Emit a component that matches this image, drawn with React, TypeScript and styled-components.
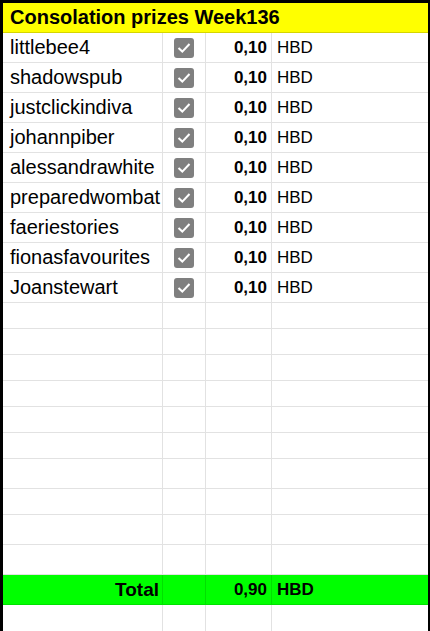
import React from 'react';
import styled, { createGlobalStyle } from 'styled-components';

const GlobalStyle = createGlobalStyle`
  html, body {
    margin: 0;
    padding: 0;
    background: #000;
  }
  * {
    box-sizing: border-box;
  }
`;

const Sheet = styled.div`
  width: 430px;
  height: 631px;
  overflow: hidden;
  background: #fff;
  border-left: 3px solid #000;
  border-top: 3px solid #000;
  border-right: 2px solid #000;
  font-family: 'Liberation Sans', Arial, sans-serif;
  color: #000;
`;

const Header = styled.div`
  height: 30px;
  background: #ffff00;
  border-bottom: 1px solid #d6d600;
  display: flex;
  align-items: center;
  padding-left: 7px;
  font-size: 20px;
  font-weight: bold;
`;

const Row = styled.div<{ $h: number; $total?: boolean }>`
  display: grid;
  grid-template-columns: 160px 43px 66px 1fr;
  height: ${(p) => p.$h}px;
  background: ${(p) => (p.$total ? '#00ff00' : '#fff')};
`;

const Cell = styled.div<{ $total?: boolean; $last?: boolean }>`
  border-bottom: 1px solid ${(p) => (p.$total ? '#00e000' : '#e2e2e2')};
  border-right: ${(p) => (p.$last ? 'none' : `1px solid ${p.$total ? '#00e000' : '#e2e2e2'}`)};
  display: flex;
  overflow: hidden;
  white-space: nowrap;
`;

const NameCell = styled(Cell)`
  align-items: center;
  padding-left: 7px;
  font-size: 20px;
`;

const TotalLabel = styled(Cell)`
  align-items: center;
  justify-content: flex-end;
  padding-right: 3px;
  font-size: 19px;
  font-weight: bold;
`;

const CheckCell = styled(Cell)`
  align-items: center;
  justify-content: center;
`;

const AmountCell = styled(Cell)`
  align-items: flex-end;
  justify-content: flex-end;
  padding: 0 4px 4px 0;
  font-size: 17px;
  font-weight: bold;
`;

const UnitCell = styled(Cell)<{ $bold?: boolean }>`
  align-items: flex-end;
  padding: 0 0 4px 5px;
  font-size: 17px;
  font-weight: ${(p) => (p.$bold ? 'bold' : 'normal')};
`;

const Box = styled.span`
  width: 20px;
  height: 20px;
  border-radius: 3px;
  background: #7f7f7f;
  display: flex;
  align-items: center;
  justify-content: center;
`;

const Check = () => (
  <Box>
    <svg width="20" height="20" viewBox="0 0 20 20">
      <path d="M4.5 10 L8.3 13.6 L15.5 6" fill="none" stroke="#fff" strokeWidth="2" />
    </svg>
  </Box>
);

const winners = [
  'littlebee4',
  'shadowspub',
  'justclickindiva',
  'johannpiber',
  'alessandrawhite',
  'preparedwombat',
  'faeriestories',
  'fionasfavourites',
  'Joanstewart',
];

const emptyHeights = [26, 26, 26, 26, 26, 26, 30, 26, 30, 30];

export default function App() {
  return (
    <Sheet>
      <GlobalStyle />
      <Header>Consolation prizes Week136</Header>
      {winners.map((name) => (
        <Row key={name} $h={30}>
          <NameCell>{name}</NameCell>
          <CheckCell>
            <Check />
          </CheckCell>
          <AmountCell>0,10</AmountCell>
          <UnitCell $last>HBD</UnitCell>
        </Row>
      ))}
      {emptyHeights.map((h, i) => (
        <Row key={i} $h={h}>
          <Cell />
          <Cell />
          <Cell />
          <Cell $last />
        </Row>
      ))}
      <Row $h={30} $total>
        <TotalLabel $total>Total</TotalLabel>
        <Cell $total />
        <AmountCell $total>0,90</AmountCell>
        <UnitCell $total $last $bold>
          HBD
        </UnitCell>
      </Row>
      <Row $h={40}>
        <Cell />
        <Cell />
        <Cell />
        <Cell $last />
      </Row>
    </Sheet>
  );
}
